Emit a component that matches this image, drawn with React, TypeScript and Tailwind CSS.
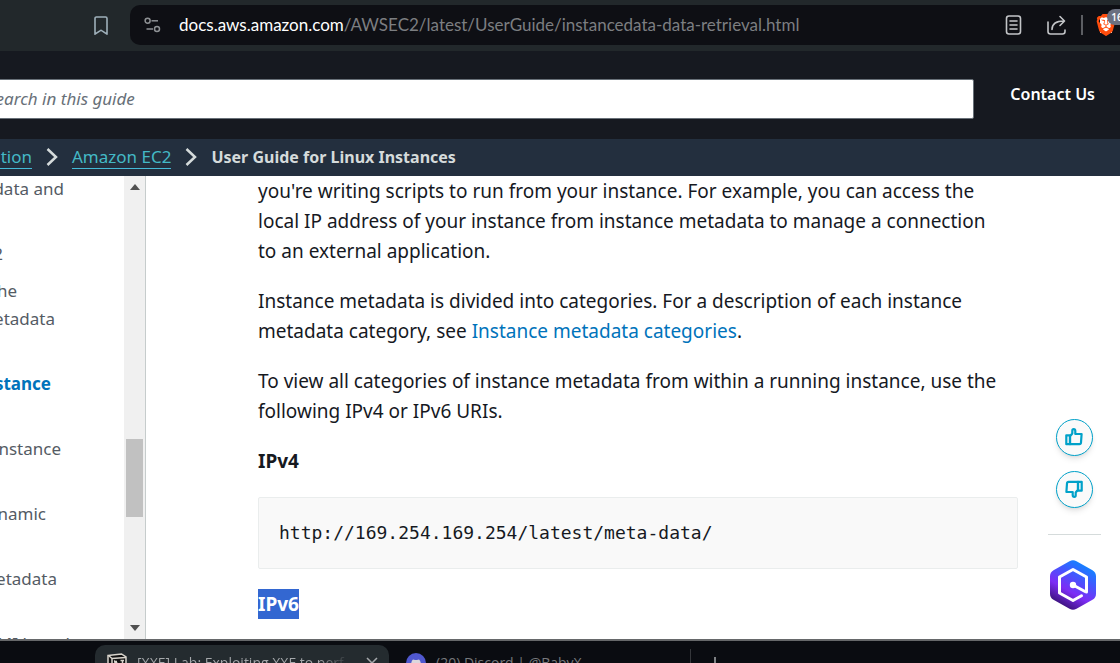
import React from "react";
import { SiBrave } from "react-icons/si";

const navItems = [
  { lines: [{ text: "data and", width: "w-16" }, null] },
  { lines: [{ text: "EC2", width: "w-[3px]" }] },
  { lines: [{ text: "the", width: "w-[17px]" }, { text: "metadata", width: "w-[55px]" }, null] },
  { lines: [{ text: "instance", width: "w-[51px]" }, null], active: true },
  { lines: [{ text: "instance", width: "w-[61px]" }, null] },
  { lines: [{ text: "dynamic", width: "w-[46px]" }, null] },
  { lines: [{ text: "metadata", width: "w-[57px]" }, null] },
  { lines: [{ text: "AMI launch", width: "w-[76px]" }] },
];

function BrowserBar() {
  return (
    <div className="flex h-[51px] shrink-0 items-center bg-[#22282b] pl-[93px]">
      <button aria-label="Bookmark" className="mr-[21px] text-[#9fb0ba]">
        <svg width="16" height="20" viewBox="0 0 16 20" fill="none" stroke="currentColor" strokeWidth="1.6" strokeLinejoin="round">
          <path d="M3.4 1h9.2A1.4 1.4 0 0 1 14 2.400V18.200L8.700 14.600a1.200 1.200 0 0 0-1.400 0L2 18.200V2.400A1.400 1.400 0 0 1 3.400 1z" />
        </svg>
      </button>
      <div className="-mt-px flex h-10 min-w-0 flex-1 items-center rounded-l-[10px] bg-[#0e0f14] pl-[14px]">
        <button aria-label="Site settings" className="mr-[18px] text-[#8e9194]">
          <svg width="17" height="16" viewBox="0 0 17 16" fill="none" stroke="currentColor" strokeWidth="1.500">
            <circle cx="3.600" cy="3.800" r="2.500" />
            <path d="M7.500 3.800H14" />
            <circle cx="13" cy="12" r="2.500" />
            <path d="M2.500 12H9" />
          </svg>
        </button>
        <a href="#url" className="min-w-0 flex-1 truncate font-['Lato','Noto_Sans',sans-serif] text-[17px] leading-7 text-[#7c7e81]">
          <span className="text-white">docs.aws.amazon.com</span>/AWSEC2/latest/UserGuide/instancedata-data-retrieval.html
        </a>
        <button aria-label="Reader mode" className="mr-6 text-[#c3c5c8]">
          <svg width="17" height="20" viewBox="0 0 17 20" fill="none" stroke="currentColor" strokeWidth="1.600">
            <rect x="1.500" y="1" width="14" height="18" rx="2.500" />
            <path d="M5 6h7M5 10h7M5 14h7" strokeLinecap="round" />
          </svg>
        </button>
        <button aria-label="Share" className="mr-[14px] text-[#c3c5c8]">
          <svg width="21" height="20" viewBox="0 0 21 20" fill="none" stroke="currentColor" strokeWidth="1.600" strokeLinecap="round" strokeLinejoin="round">
            <path d="M2 7v9.500A2.500 2.500 0 0 0 4.500 19h12a2.500 2.500 0 0 0 2.500-2.500V15" />
            <path d="M6 14.500C6 8.500 10 6 18 6M14 1.500 18.500 6 14 10.500" />
          </svg>
        </button>
        <span className="h-5 w-0.5 shrink-0 bg-[#5c5e63]" />
        <button aria-label="Shields" className="relative ml-3 mr-[3px] h-6 w-[22px] shrink-0">
          <span className="absolute inset-x-[5px] inset-y-1 bg-white" />
          <SiBrave className="relative h-6 w-[22px] text-[#ff4d0d]" />
          <span className="absolute -top-1 left-3 flex h-4 w-5 items-center justify-center rounded-full bg-[#6b7080] font-['Open_Sans',sans-serif] text-[10px] font-semibold text-white">
            16
          </span>
        </button>
      </div>
    </div>
  );
}

function Chevron() {
  return (
    <svg aria-hidden="true" width="12" height="20" viewBox="0 0 12 20" fill="none" stroke="#d5dbdb" strokeWidth="2.500" className="shrink-0">
      <path d="M1.500 2 10 10l-8.500 8" />
    </svg>
  );
}

function Sidebar() {
  return (
    <aside className="flex w-[146px] shrink-0 border-r border-[#c6cccc] bg-white">
      <nav className="min-w-0 flex-1 overflow-hidden">
        <ul className="-mt-px flex flex-col gap-[9px]">
          {navItems.map((item, i) => (
            <li key={i}>
              <a href="#section" className={item.active ? "block font-bold text-[#0073bb]" : "block text-[#545b64]"}>
                {item.lines.map((line, j) => (
                  <span key={j} className={`flex h-7 items-center justify-end whitespace-nowrap text-[17px] ${line ? line.width : ""}`}>
                    {line ? line.text : ""}
                  </span>
                ))}
              </a>
            </li>
          ))}
        </ul>
      </nav>
      <div className="flex w-[21px] flex-col items-center bg-[#f0f0f0] py-2">
        <svg width="10" height="6" viewBox="0 0 10 6" fill="#505050"><path d="M0 6 5 0l5 6z" /></svg>
        <div className="flex-[247]" />
        <div className="h-[78px] w-[17px] bg-[#c1c1c1]" />
        <div className="flex-[107]" />
        <svg width="10" height="6" viewBox="0 0 10 6" fill="#505050"><path d="M0 0h10L5 6z" /></svg>
      </div>
    </aside>
  );
}

function Thumb({ down = false }: { down?: boolean }) {
  return (
    <button
      aria-label={down ? "Not helpful" : "Helpful"}
      className="flex size-[37px] items-center justify-center rounded-full border border-[#00a1c9] bg-[#fafafa] text-[#00a1c9] shadow-md"
    >
      <svg width="18" height="18" viewBox="0 0 18 18" fill="none" stroke="currentColor" strokeWidth="2.200" strokeLinejoin="round" className={down ? "mb-0.5 mr-px rotate-180" : "mb-0.5 mr-px"}>
        <path d="M1.300 7.300H5v8.900H1.300z" />
        <path d="M5 8.300 7.300 5.500V2.800Q7.300 1.200 8.700 1.200 10.300 1.200 10.300 3v3h6.300l-.6 8.500q-.1 1.700-1.600 1.700H5z" />
      </svg>
    </button>
  );
}

function Assistant() {
  return (
    <button aria-label="Open assistant" className="mr-1">
      <svg width="46" height="50" viewBox="0 0 46 50" fill="none" className="block">
        <defs>
          <linearGradient id="hex" x1="38" y1="3" x2="12" y2="48" gradientUnits="userSpaceOnUse">
            <stop offset="0" stopColor="#0a8cff" />
            <stop offset="0.300" stopColor="#3d5cff" />
            <stop offset="0.650" stopColor="#7d2cf5" />
            <stop offset="1" stopColor="#35106f" />
          </linearGradient>
        </defs>
        <path d="M19.500 1.200q3.500-2 7 0L42.500 10.200q3.500 2 3.500 6v17.600q0 4-3.500 6L26.500 48.800q-3.500 2-7 0L3.500 39.800q-3.500-2-3.500-6V16.200q0-4 3.500-6z" fill="url(#hex)" />
        <path d="M36.500 32V17L23 9.500 9.500 17v16L23 40.500l8.500-4.700" stroke="#fff" strokeWidth="3" strokeLinejoin="round" strokeLinecap="round" />
        <path d="m23 25 13 7" stroke="#fff" strokeWidth="3" />
        <circle cx="23" cy="25" r="3.200" fill="#fff" />
      </svg>
    </button>
  );
}

export default function App() {
  return (
    <div className="flex h-screen flex-col overflow-hidden bg-white font-['Noto_Sans',sans-serif] text-[#16191f]">
      <BrowserBar />
      <header className="flex h-[88px] shrink-0 items-start bg-[#161920] pr-[25px] pt-7">
        <input
          aria-label="Search in this guide"
          placeholder="Search in this guide"
          className="-ml-10 mr-9 h-10 min-w-0 flex-1 rounded-xs border border-[#687078] bg-white pb-0.5 pl-[26px] text-[17px] italic placeholder:text-[#687078]"
        />
        <a href="#contact" className="mt-px text-base font-semibold leading-7 text-white">Contact Us</a>
      </header>
      <nav aria-label="Breadcrumb" className="flex h-[37px] shrink-0 items-center bg-[#232f3e] pb-px text-[17px]">
        <span className="flex w-8 justify-end">
          <a href="#docs" className="border-b border-[#44b9d6] leading-[22px] text-[#44b9c6]">Documentation</a>
        </span>
        <span className="ml-[14px] mr-[14px] flex"><Chevron /></span>
        <a href="#ec2" className="border-b border-[#44b9d6] leading-[22px] text-[#44b9c6]">Amazon EC2</a>
        <span className="ml-[14px] mr-[14px] flex"><Chevron /></span>
        <span className="text-base font-bold text-[#d5dbdb]">User Guide for Linux Instances</span>
      </nav>
      <div className="flex min-h-0 flex-1">
        <Sidebar />
        <main className="mr-[30px] flex min-w-0 flex-1 flex-col gap-5 overflow-hidden pl-[112px] text-[19px] leading-[30px]">
          <p className="pr-4">
            you're writing scripts to run from your instance. For example, you can access the local IP address of your
            instance from instance metadata to manage a connection to an external application.
          </p>
          <p className="pr-4">
            Instance metadata is divided into categories. For a description of each instance metadata category, see{" "}
            <a href="#categories" className="text-[#0073bb]">Instance metadata categories</a>.
          </p>
          <p className="pr-4">
            To view all categories of instance metadata from within a running instance, use the following IPv4 or IPv6
            URIs.
          </p>
          <h2 className="font-bold">IPv4</h2>
          <pre className="mt-px flex h-[72px] shrink-0 items-center rounded-xs border border-[#eaeded] bg-[#f9f9f9] px-5 text-lg">
            <code className="font-['DejaVu_Sans_Mono',monospace]">http://169.254.169.254/latest/meta-data/</code>
          </pre>
          <h2 className="font-bold"><span className="inline-block bg-[#3367d1] text-white">IPv6</span></h2>
        </main>
        <aside className="mr-[19px] flex w-[53px] shrink-0 flex-col items-center justify-end pb-[29px]">
          <Thumb />
          <div className="mt-[15px]"><Thumb down /></div>
          <hr className="mb-[25px] mt-[26px] w-full border-[#d5dbdb]" />
          <Assistant />
        </aside>
      </div>
      <div className="flex h-6 shrink-0 overflow-hidden border-t-2 border-[#66686a] bg-[#0a0c11] pl-[95px] font-['Open_Sans',sans-serif] text-sm">
        <div className="mt-1 flex h-9 w-[294px] items-center rounded-t-[10px] bg-[#242b2f] pl-3 pr-[11px] text-[#a5a8ab]">
          <svg width="20" height="20" viewBox="0 0 20 20" className="mr-[10px] shrink-0">
            <path d="M1 2.500 14.500 1 19 4v13.500L5 19l-4-4z" fill="#111" stroke="#d8d4cc" strokeWidth="1.500" />
            <path d="M1.500 2.500 5 5.500 19 4.500M5 5.500V19" stroke="#d8d4cc" strokeWidth="1.500" fill="none" />
            <path d="M8 16V8.500l7.500 6.500V7.500M7 8.500h3M13.500 7.500h3.500" stroke="#d8d4cc" strokeWidth="1.500" fill="none" />
          </svg>
          <a href="#lab" className="flex-1 overflow-hidden whitespace-nowrap bg-linear-to-r from-[#a5a8ab] from-85% to-[#242b2f] bg-clip-text text-transparent">[XXE] Lab: Exploiting XXE to perf</a>
          <button aria-label="Close tab" className="ml-4">
            <svg width="12" height="12" viewBox="0 0 12 12" stroke="currentColor" strokeWidth="1.500"><path d="m1 1 10 10M11 1 1 11" /></svg>
          </button>
        </div>
        <div className="mt-1 flex h-9 w-[301px] items-center pl-[17px] text-[#77797c]">
          <svg width="20" height="20" viewBox="0 0 20 20" className="mr-[10px] shrink-0">
            <circle cx="10" cy="10" r="10" fill="#5058cf" />
            <path d="M5 13q0-5 2-6.500l2 .5h2l2-.5q2 1.500 2 6.500l-2.500 1-1-1h-3l-1 1z" fill="#dcd7dd" />
          </svg>
          <a href="#discord" className="whitespace-nowrap">(20) Discord | @BabyX</a>
        </div>
        <span className="mt-2 h-5 w-px bg-[#35373b]" />
        <button aria-label="New tab" className="ml-[17px] mt-4 self-start text-[#a5a8ab]">
          <svg width="14" height="14" viewBox="0 0 14 14" stroke="currentColor" strokeWidth="1.500" className="block"><path d="M7 0v14M0 7h14" /></svg>
        </button>
      </div>
    </div>
  );
}
